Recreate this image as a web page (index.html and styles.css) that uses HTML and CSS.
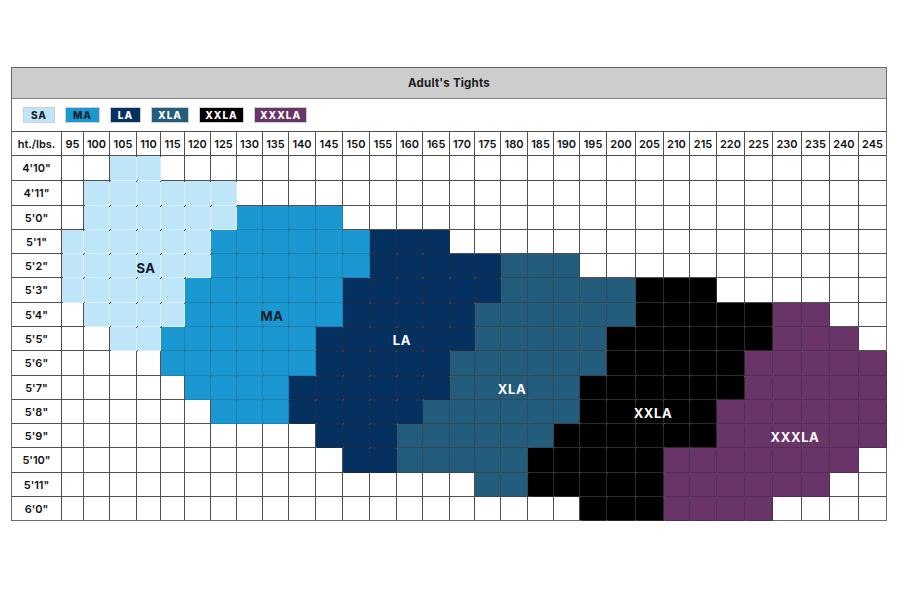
FILE: index.html
```html
<!DOCTYPE html>
<html lang="en">
<head>
<meta charset="utf-8">
<title>Adult's Tights</title>
<link rel="stylesheet" href="styles.css">
</head>
<body>
<div class="chart">
  <div class="title">Adult's Tights</div>
  <div class="legend">
    <span class="key s k-sa">SA</span>
    <span class="key m k-ma">MA</span>
    <span class="key l k-la">LA</span>
    <span class="key x k-xla">XLA</span>
    <span class="key k k-xxla">XXLA</span>
    <span class="key p k-xxxla">XXXLA</span>
  </div>
  <div class="grid">
    <div class="hd">ht./lbs.</div><div class="hd">95</div><div class="hd">100</div><div class="hd">105</div><div class="hd">110</div><div class="hd">115</div><div class="hd">120</div><div class="hd">125</div><div class="hd">130</div><div class="hd">135</div><div class="hd">140</div><div class="hd">145</div><div class="hd">150</div><div class="hd">155</div><div class="hd">160</div><div class="hd">165</div><div class="hd">170</div><div class="hd">175</div><div class="hd">180</div><div class="hd">185</div><div class="hd">190</div><div class="hd">195</div><div class="hd">200</div><div class="hd">205</div><div class="hd">210</div><div class="hd">215</div><div class="hd">220</div><div class="hd">225</div><div class="hd">230</div><div class="hd">235</div><div class="hd">240</div><div class="hd">245</div>

    <div class="hd">4'10"</div><div></div><div></div><div class="s"></div><div class="s"></div><div></div><div></div><div></div><div></div><div></div><div></div><div></div><div></div><div></div><div></div><div></div><div></div><div></div><div></div><div></div><div></div><div></div><div></div><div></div><div></div><div></div><div></div><div></div><div></div><div></div><div></div><div></div>

    <div class="hd">4'11"</div><div></div><div class="s"></div><div class="s"></div><div class="s"></div><div class="s"></div><div class="s"></div><div class="s"></div><div></div><div></div><div></div><div></div><div></div><div></div><div></div><div></div><div></div><div></div><div></div><div></div><div></div><div></div><div></div><div></div><div></div><div></div><div></div><div></div><div></div><div></div><div></div><div></div>

    <div class="hd">5'0"</div><div></div><div class="s"></div><div class="s"></div><div class="s"></div><div class="s"></div><div class="s"></div><div class="s"></div><div class="m"></div><div class="m"></div><div class="m"></div><div class="m"></div><div></div><div></div><div></div><div></div><div></div><div></div><div></div><div></div><div></div><div></div><div></div><div></div><div></div><div></div><div></div><div></div><div></div><div></div><div></div><div></div>

    <div class="hd">5'1"</div><div class="s"></div><div class="s"></div><div class="s"></div><div class="s"></div><div class="s"></div><div class="s"></div><div class="m"></div><div class="m"></div><div class="m"></div><div class="m"></div><div class="m"></div><div class="m"></div><div class="l"></div><div class="l"></div><div class="l"></div><div></div><div></div><div></div><div></div><div></div><div></div><div></div><div></div><div></div><div></div><div></div><div></div><div></div><div></div><div></div><div></div>

    <div class="hd">5'2"</div><div class="s"></div><div class="s"></div><div class="s"></div><div class="s"></div><div class="s"></div><div class="s"></div><div class="m"></div><div class="m"></div><div class="m"></div><div class="m"></div><div class="m"></div><div class="m"></div><div class="l"></div><div class="l"></div><div class="l"></div><div class="l"></div><div class="l"></div><div class="x"></div><div class="x"></div><div class="x"></div><div></div><div></div><div></div><div></div><div></div><div></div><div></div><div></div><div></div><div></div><div></div>

    <div class="hd">5'3"</div><div class="s"></div><div class="s"></div><div class="s"></div><div class="s"></div><div class="s"></div><div class="m"></div><div class="m"></div><div class="m"></div><div class="m"></div><div class="m"></div><div class="m"></div><div class="l"></div><div class="l"></div><div class="l"></div><div class="l"></div><div class="l"></div><div class="l"></div><div class="x"></div><div class="x"></div><div class="x"></div><div class="x"></div><div class="x"></div><div class="k"></div><div class="k"></div><div class="k"></div><div></div><div></div><div></div><div></div><div></div><div></div>

    <div class="hd">5'4"</div><div></div><div class="s"></div><div class="s"></div><div class="s"></div><div class="s"></div><div class="m"></div><div class="m"></div><div class="m"></div><div class="m"></div><div class="m"></div><div class="m"></div><div class="l"></div><div class="l"></div><div class="l"></div><div class="l"></div><div class="l"></div><div class="x"></div><div class="x"></div><div class="x"></div><div class="x"></div><div class="x"></div><div class="x"></div><div class="k"></div><div class="k"></div><div class="k"></div><div class="k"></div><div class="k"></div><div class="p"></div><div class="p"></div><div></div><div></div>

    <div class="hd">5'5"</div><div></div><div></div><div class="s"></div><div class="s"></div><div class="m"></div><div class="m"></div><div class="m"></div><div class="m"></div><div class="m"></div><div class="m"></div><div class="l"></div><div class="l"></div><div class="l"></div><div class="l"></div><div class="l"></div><div class="l"></div><div class="x"></div><div class="x"></div><div class="x"></div><div class="x"></div><div class="x"></div><div class="k"></div><div class="k"></div><div class="k"></div><div class="k"></div><div class="k"></div><div class="k"></div><div class="p"></div><div class="p"></div><div class="p"></div><div></div>

    <div class="hd">5'6"</div><div></div><div></div><div></div><div></div><div class="m"></div><div class="m"></div><div class="m"></div><div class="m"></div><div class="m"></div><div class="m"></div><div class="l"></div><div class="l"></div><div class="l"></div><div class="l"></div><div class="l"></div><div class="x"></div><div class="x"></div><div class="x"></div><div class="x"></div><div class="x"></div><div class="x"></div><div class="k"></div><div class="k"></div><div class="k"></div><div class="k"></div><div class="k"></div><div class="p"></div><div class="p"></div><div class="p"></div><div class="p"></div><div class="p"></div>

    <div class="hd">5'7"</div><div></div><div></div><div></div><div></div><div></div><div class="m"></div><div class="m"></div><div class="m"></div><div class="m"></div><div class="l"></div><div class="l"></div><div class="l"></div><div class="l"></div><div class="l"></div><div class="l"></div><div class="x"></div><div class="x"></div><div class="x"></div><div class="x"></div><div class="x"></div><div class="k"></div><div class="k"></div><div class="k"></div><div class="k"></div><div class="k"></div><div class="k"></div><div class="p"></div><div class="p"></div><div class="p"></div><div class="p"></div><div class="p"></div>

    <div class="hd">5'8"</div><div></div><div></div><div></div><div></div><div></div><div></div><div class="m"></div><div class="m"></div><div class="m"></div><div class="l"></div><div class="l"></div><div class="l"></div><div class="l"></div><div class="l"></div><div class="x"></div><div class="x"></div><div class="x"></div><div class="x"></div><div class="x"></div><div class="x"></div><div class="k"></div><div class="k"></div><div class="k"></div><div class="k"></div><div class="k"></div><div class="p"></div><div class="p"></div><div class="p"></div><div class="p"></div><div class="p"></div><div class="p"></div>

    <div class="hd">5'9"</div><div></div><div></div><div></div><div></div><div></div><div></div><div></div><div></div><div></div><div></div><div class="l"></div><div class="l"></div><div class="l"></div><div class="x"></div><div class="x"></div><div class="x"></div><div class="x"></div><div class="x"></div><div class="x"></div><div class="k"></div><div class="k"></div><div class="k"></div><div class="k"></div><div class="k"></div><div class="k"></div><div class="p"></div><div class="p"></div><div class="p"></div><div class="p"></div><div class="p"></div><div class="p"></div>

    <div class="hd">5'10"</div><div></div><div></div><div></div><div></div><div></div><div></div><div></div><div></div><div></div><div></div><div></div><div class="l"></div><div class="l"></div><div class="x"></div><div class="x"></div><div class="x"></div><div class="x"></div><div class="x"></div><div class="k"></div><div class="k"></div><div class="k"></div><div class="k"></div><div class="k"></div><div class="p"></div><div class="p"></div><div class="p"></div><div class="p"></div><div class="p"></div><div class="p"></div><div class="p"></div><div></div>

    <div class="hd">5'11"</div><div></div><div></div><div></div><div></div><div></div><div></div><div></div><div></div><div></div><div></div><div></div><div></div><div></div><div></div><div></div><div></div><div class="x"></div><div class="x"></div><div class="k"></div><div class="k"></div><div class="k"></div><div class="k"></div><div class="k"></div><div class="p"></div><div class="p"></div><div class="p"></div><div class="p"></div><div class="p"></div><div class="p"></div><div></div><div></div>

    <div class="hd">6'0"</div><div></div><div></div><div></div><div></div><div></div><div></div><div></div><div></div><div></div><div></div><div></div><div></div><div></div><div></div><div></div><div></div><div></div><div></div><div></div><div></div><div class="k"></div><div class="k"></div><div class="k"></div><div class="p"></div><div class="p"></div><div class="p"></div><div class="p"></div><div></div><div></div><div></div><div></div>
  </div>
  <span class="tag dark t-sa">SA</span>
  <span class="tag dark t-ma">MA</span>
  <span class="tag t-la">LA</span>
  <span class="tag t-xla">XLA</span>
  <span class="tag t-xxla">XXLA</span>
  <span class="tag t-xxxla">XXXLA</span>
</div>
</body>
</html>
```

FILE: styles.css
```css
* { box-sizing: border-box; }

body {
  margin: 0;
  background: #fff;
  font-family: "Inter", "Open Sans", "DejaVu Sans", sans-serif;
  color: #141414;
}

.chart {
  position: relative;
  width: 876px;
  margin: 67px auto 0;
  border: 1px solid #6a6a6a;
}

.title {
  height: 31px;
  background: #cdcdcd;
  border-bottom: 1px solid #858585;
  display: flex;
  align-items: center;
  justify-content: center;
  font-size: 11.5px;
  font-weight: 700;
  letter-spacing: 0.2px;
  color: #1a1a1a;
}

.legend {
  height: 32px;
  display: flex;
  align-items: center;
  gap: 10px;
  padding-left: 11px;
}

.key {
  height: 16px;
  display: flex;
  align-items: center;
  justify-content: center;
  font-size: 10px;
  font-weight: 800;
  letter-spacing: 1px;
  color: #fff;
  border: 1px solid #cfcfcf;
}
.key.s, .key.m { color: #15202e; }
.k-sa { width: 32px; }
.k-ma { width: 35px; }
.k-la { width: 31px; }
.k-xla { width: 38px; }
.k-xxla { width: 45px; }
.k-xxxla { width: 53px; }

.grid {
  display: grid;
  grid-template-columns: 49px 21px 25px 26px 23px 23px 25px 25px 25px 25px 26px 26px 26px 26px 25px 26px 24px 25px 26px 25px 25px 26px 28px 27px 25px 26px 27px 27px 28px 27px 28px 27px;
  grid-template-rows: 23px 24px 24px 23px 23px 23px 24px 23px 23px 24px 23px 23px 23px 24px 23px 23px;
  gap: 1px;
  background: #505050;
  border-top: 1px solid #505050;
}

.grid > div {
  background: #fff;
}

.grid > .hd {
  display: flex;
  align-items: center;
  justify-content: center;
  font-size: 11px;
  font-weight: 600;
  color: #111;
  white-space: nowrap;
}

.s { background: #bee6f8 !important; box-shadow: 1px 1px 0 0 #d9eff9; }
.m { background: #1b98d2 !important; box-shadow: 1px 1px 0 0 #1784b6; }
.l { background: #04315f !important; box-shadow: 1px 1px 0 0 #1c2d44; }
.x { background: #235d7b !important; box-shadow: 1px 1px 0 0 #2b4b5d; }
.k { background: #000 !important; box-shadow: 1px 1px 0 0 #2a2a2a; }
.p { background: #693467 !important; box-shadow: 1px 1px 0 0 #552c54; }

.key.s, .key.m, .key.l, .key.x, .key.k, .key.p { box-shadow: none; }

.tag {
  position: absolute;
  transform: translate(-50%, -50%);
  font-size: 13px;
  font-weight: 700;
  letter-spacing: 0.6px;
  color: #fff;
  white-space: nowrap;
}
.tag.dark { color: #121a26; }
.t-sa { left: 134px; top: 200px; }
.t-ma { left: 260px; top: 248px; }
.t-la { left: 390px; top: 272px; }
.t-xla { left: 500px; top: 321px; }
.t-xxla { left: 641px; top: 345px; }
.t-xxxla { left: 783px; top: 369px; }
```
